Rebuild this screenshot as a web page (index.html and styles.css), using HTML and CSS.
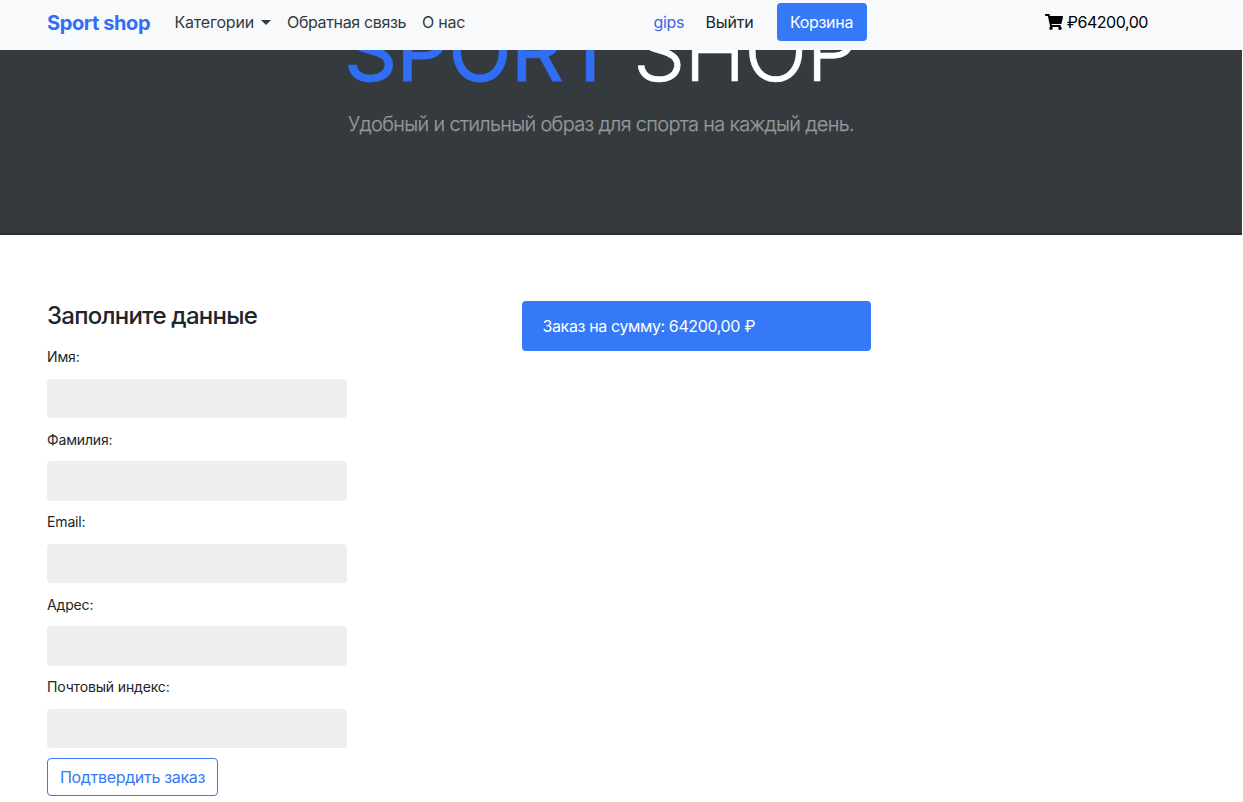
FILE: index.html
```html
<!DOCTYPE html>
<html lang="ru">
<head>
<meta charset="utf-8">
<title>Sport shop</title>
<link rel="stylesheet" href="styles.css">
</head>
<body>
<header class="navbar">
  <a class="brand">Sport shop</a>
  <nav class="menu">
    <a class="dropdown">Категории</a>
    <a class="feedback">Обратная связь</a>
    <a class="about">О нас</a>
  </nav>
  <div class="account">
    <a class="user">gips</a>
    <a class="logout">Выйти</a>
    <a class="cart-btn">Корзина</a>
  </div>
  <div class="total">
    <svg class="cart-icon" viewBox="0 0 576 512"><path fill="#000" d="M528.12 301.319l47.273-208C578.806 78.301 567.391 64 551.99 64H159.208l-9.166-44.81C147.758 8.021 137.93 0 126.529 0H24C10.745 0 0 10.745 0 24v16c0 13.255 10.745 24 24 24h69.883l70.248 343.435C147.325 417.1 136 435.222 136 456c0 30.928 25.072 56 56 56s56-25.072 56-56c0-15.674-6.447-29.835-16.824-40h209.647C430.447 426.165 424 440.326 424 456c0 30.928 25.072 56 56 56s56-25.072 56-56c0-22.172-12.888-41.332-31.579-50.405l5.517-24.276c3.413-15.018-8.002-29.319-23.403-29.319H218.117l-6.545-32h293.145c11.206 0 20.92-7.754 23.403-18.681z"/></svg>
    <span class="sum">₽64200,00</span>
  </div>
</header>
<section class="hero">
  <div class="hero-text">
    <h1 class="title"><span class="accent">SPORT</span> <span class="shop">SHOP</span></h1>
    <p class="lead">Удобный и стильный образ для спорта на каждый день.</p>
  </div>
</section>
<main class="content">
  <form class="order-form">
    <h2 class="form-title">Заполните данные</h2>
    <div class="field"><label for="name">Имя:</label><input id="name"></div>
    <div class="field"><label for="surname">Фамилия:</label><input id="surname"></div>
    <div class="field"><label for="email">Email:</label><input id="email"></div>
    <div class="field"><label for="address">Адрес:</label><input id="address"></div>
    <div class="field"><label for="zip">Почтовый индекс:</label><input id="zip"></div>
    <button class="submit" type="button"><span>Подтвердить заказ</span></button>
  </form>
  <div class="summary"><span>Заказ на сумму: 64200,00 ₽</span></div>
</main>
</body>
</html>
```
FILE: styles.css
```css
* { box-sizing: border-box; }
html { overflow: hidden; background: #fff; }
body {
  width: 1242px;
  margin: 0;
  color: #212529;
  font-family: Inter, "Noto Sans", sans-serif;
  font-size: 16px;
  line-height: 24px;
  overflow: hidden;
}
.navbar {
  position: fixed;
  top: 0;
  left: 0;
  z-index: 2;
  display: flex;
  align-items: center;
  width: 1242px;
  height: 50px;
  padding: 0 94px 6px 47px;
  background: #f8f9fb;
  white-space: nowrap;
}
.brand { width: 127.5px; padding-top: 1px; color: #306ef6; font-size: 20px; font-weight: 700; letter-spacing: -0.4px; }
.menu { display: flex; gap: 16px; color: #343a40; }
.dropdown { display: flex; align-items: center; width: 96.5px; justify-content: space-between; letter-spacing: -0.2px; }
.dropdown::after { content: ""; border: 5px solid transparent; border-top-color: #343a40; border-bottom: 0; }
.feedback { width: 119px; letter-spacing: -0.35px; }
.about { width: 43.5px; letter-spacing: -0.25px; }
.account { display: flex; align-items: center; gap: 21px; margin-left: 188px; color: #212529; }
.user { width: 31px; color: #4263e0; letter-spacing: -0.35px; }
.logout { width: 50px; letter-spacing: -0.15px; }
.cart-btn { width: 90px; height: 38px; border-radius: 4px; background: #3579f6; color: #fff; line-height: 39px; text-align: center; letter-spacing: -0.3px; }
.total { display: flex; align-items: center; gap: 4px; margin-left: auto; color: #000; letter-spacing: -0.45px; }
.cart-icon { width: 18px; height: 16px; }
.hero {
  display: flex;
  justify-content: center;
  height: 235px;
  padding-right: 40px;
  background: #353a3e;
  border-bottom: 2px solid #2d3033;
}
.hero-text { width: 506px; white-space: nowrap; }
.title { margin: 3px 0 0 -4px; font-size: 83px; line-height: 96px; font-weight: 300; color: #fff; letter-spacing: -1.2px; word-spacing: -5px; -webkit-text-stroke: 0.6px #fff; }
.accent { color: #306ef6; font-weight: 400; letter-spacing: -1px; -webkit-text-stroke: 0.8px #306ef6; }
.lead { margin: 10px 0 0; color: #96989b; font-size: 20px; line-height: 30px; font-weight: 300; letter-spacing: -0.68px; -webkit-text-stroke: 0.25px #96989b; }
.content { display: flex; align-items: flex-start; gap: 174.5px; padding: 66px 47px 0; }
.order-form { width: 300px; }
.form-title { margin: 0 0 11.4px; font-size: 24px; line-height: 29px; font-weight: 500; letter-spacing: -0.76px; }
.field { display: flex; flex-direction: column; height: 82.5px; font-size: 14px; line-height: 31px; letter-spacing: -0.15px; }
.field input { width: 300px; height: 39.5px; margin-top: 6.5px; border: 0; border-radius: 4px; background: #eee; }
.submit { display: block; width: 171px; height: 38px; margin-top: 4.2px; padding: 0; border: 1px solid #3579f6; border-radius: 4px; background: #fff; color: #3579f6; font: inherit; letter-spacing: -0.32px; white-space: nowrap; }
.summary { width: 349.5px; height: 50px; padding: 0 21px; border-radius: 4px; background: #3579f6; color: #fff; line-height: 51px; letter-spacing: -0.38px; white-space: nowrap; }
```
